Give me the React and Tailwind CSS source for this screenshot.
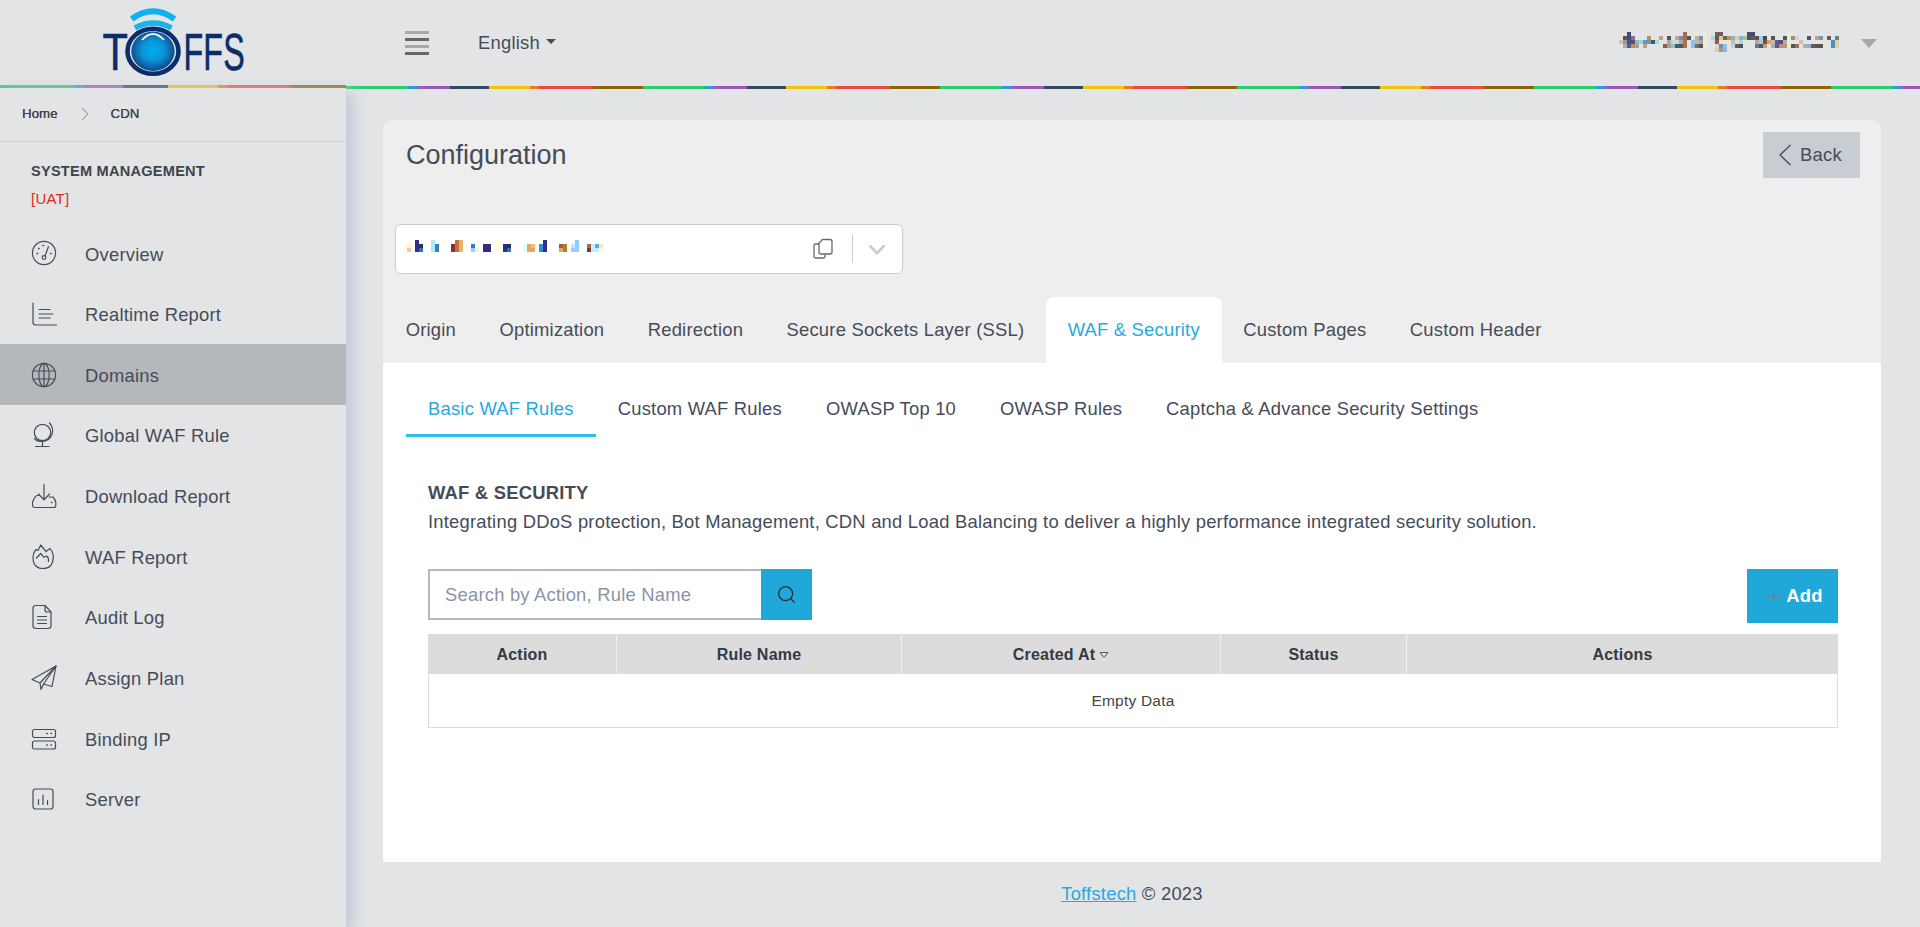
import React from "react";
import { Search, Plus } from "lucide-react";

const stroke = "#454c58";

const userCells = [
  [0, [[2,"#4a4a78"],[16,"#a8704a"],[21,"#ecebd8"],[24,"#6f5f60"],[25,"#6f5f60"],[32,"#4a4a70"],[33,"#4a4a70"],[42,"#ecebd8"]]],
  [1, [[1,"#55585c"],[2,"#4a4a78"],[3,"#77777f"],[7,"#c09050"],[10,"#c0a078"],[12,"#555555"],[14,"#c0a890"],[15,"#7a8ab0"],[16,"#a8704a"],[17,"#555555"],[19,"#c8b090"],[20,"#6f8fb0"],[21,"#ecebd8"],[23,"#a8d8e8"],[24,"#6a5a50"],[25,"#e0c8a0"],[26,"#6a6a50"],[27,"#c09060"],[28,"#7fb0e0"],[29,"#d8d0b0"],[30,"#90b0d0"],[31,"#a0c0c0"],[32,"#555545"],[33,"#605a70"],[34,"#555555"],[35,"#a8c8e8"],[36,"#444455"],[38,"#555566"],[41,"#555555"],[42,"#ecebd8"],[43,"#a09070"],[44,"#c8d8e8"],[47,"#555555"],[49,"#c0a080"],[50,"#8090b0"],[52,"#6a5a50"],[54,"#6a7a90"]]],
  [2, [[0,"#e0c09a"],[1,"#9a9aa0"],[2,"#50507a"],[3,"#50507a"],[4,"#b0b0b0"],[5,"#a0d0e8"],[6,"#5b9bd5"],[7,"#5b9bd5"],[8,"#555555"],[9,"#a8d8e8"],[12,"#b0a8a0"],[13,"#b0e0e0"],[14,"#c0e0e0"],[15,"#a8a8a8"],[16,"#a8704a"],[18,"#90c0e8"],[19,"#a8c0c8"],[20,"#a8a8a0"],[21,"#ecebd8"],[23,"#e0e0c8"],[24,"#a05060"],[25,"#e8e8d0"],[26,"#e8e8c8"],[27,"#e8e8c8"],[28,"#c0c0b0"],[29,"#e0e0c0"],[30,"#b0d0e0"],[31,"#e8e8c8"],[34,"#b0a8a0"],[35,"#a8c8e8"],[36,"#805030"],[37,"#d0a878"],[38,"#e0b890"],[39,"#605a90"],[40,"#505080"],[41,"#b0b0b0"],[42,"#ecebd8"],[45,"#e0c090"],[50,"#e8e8d0"],[53,"#4f8fc0"],[54,"#e0d0a0"]]],
  [3, [[1,"#a0b0c0"],[2,"#555a80"],[3,"#c09060"],[4,"#a0a0a0"],[6,"#c8a070"],[11,"#905858"],[12,"#a8a090"],[13,"#90c0e0"],[14,"#555560"],[15,"#555560"],[16,"#a8704a"],[18,"#90c0e8"],[19,"#70705a"],[20,"#555555"],[21,"#ecebd8"],[24,"#d8d8c0"],[25,"#6f8fb0"],[26,"#90c0e8"],[28,"#c0d0e8"],[29,"#555a70"],[30,"#505050"],[34,"#6a7a90"],[35,"#555555"],[36,"#c8a070"],[37,"#e0e0e0"],[38,"#a8b0c0"],[39,"#5a5a90"],[40,"#c09868"],[41,"#c09868"],[42,"#ecebd8"],[43,"#555555"],[44,"#a86a4a"],[46,"#a8b0b8"],[47,"#90b0d0"],[48,"#605a5a"],[49,"#555555"],[50,"#555555"],[51,"#e8e8d0"],[53,"#4f8fc0"],[54,"#e0d0a0"]]],
  [4, [[24,"#e0c8a8"],[25,"#909aa0"],[26,"#90b8d8"]]],
];

const domainCells = [
  [407,244,"#fff3cf"],[407,248,"#fdc98c"],
  [415,240,"#2e3192"],[415,244,"#2e3192"],[415,248,"#2e3192"],[419,244,"#333333"],[419,248,"#2f6fc0"],
  [431,240,"#b0e8ff"],[431,244,"#b0e8ff"],[431,248,"#b0e8ff"],[435,244,"#3a7fc0"],[435,248,"#3a7fc0"],
  [451,244,"#8a3030"],[451,248,"#8a3030"],[455,240,"#b87838"],[455,244,"#b87838"],[455,248,"#b87838"],[459,240,"#eab070"],[459,244,"#eab070"],[459,248,"#eab070"],
  [471,244,"#2f7fc0"],[471,248,"#99ccff"],[475,248,"#fff0c0"],
  [483,244,"#2e2e80"],[483,248,"#2e2e80"],[487,244,"#442e50"],[487,248,"#2e2e80"],
  [495,240,"#ffffd0"],[495,244,"#ffffd0"],[495,248,"#ffffd0"],
  [503,244,"#2e2e80"],[503,248,"#2e2e80"],[507,244,"#333333"],[507,248,"#2f6fc0"],
  [523,244,"#e0ffff"],[523,248,"#e0ffff"],[527,244,"#e0a860"],[527,248,"#e0a860"],[531,244,"#f0c080"],[531,248,"#e0a860"],
  [539,244,"#2f8fd0"],[539,248,"#2f8fd0"],[543,240,"#2e3192"],[543,244,"#2e3192"],[543,248,"#2e3192"],
  [559,244,"#a05a30"],[559,248,"#e0a860"],[563,244,"#b87838"],[563,248,"#b87838"],
  [571,244,"#bfe6ff"],[571,248,"#99ccff"],[575,240,"#8fcfff"],[575,244,"#8fcfff"],[575,248,"#8fcfff"],
  [587,244,"#a86a40"],[587,248,"#7a3a30"],
  [591,244,"#bff0ff"],[591,248,"#bff0ff"],[595,244,"#60a8e0"],[595,248,"#bfefff"],[599,244,"#ffe8b0"],[599,248,"#fff8e0"],
];

function UserMosaic() {
  return (
    <svg width="220" height="24" viewBox="0 0 220 24" shapeRendering="crispEdges" className="mt-[2px]">
      {userCells.map(([row, cells]) =>
        cells.map(([col, color]) => (
          <rect key={`${row}-${col}`} x={col * 4} y={row * 4} width="4" height="4" fill={color} />
        ))
      )}
    </svg>
  );
}

function DomainMosaic() {
  return (
    <svg width="196" height="12" viewBox="407 240 196 12" shapeRendering="crispEdges" className="mb-[6px]">
      {domainCells.map(([x, y, color]) => (
        <rect key={`${x}-${y}`} x={x} y={y} width="4" height="4" fill={color} />
      ))}
    </svg>
  );
}

function Logo() {
  return (
    <svg width="170" height="85" viewBox="88 0 170 85" className="block overflow-visible">
      <defs>
        <radialGradient id="ball" cx="50%" cy="48%" r="52%">
          <stop offset="0%" stopColor="#00aeef" />
          <stop offset="50%" stopColor="#0b93d6" />
          <stop offset="100%" stopColor="#0d4a8c" />
        </radialGradient>
      </defs>
      <text transform="translate(102.5 70) scale(0.8 1)" fontFamily="'Liberation Sans',sans-serif" fontSize="52" fill="#0c2d6b" stroke="#0c2d6b" strokeWidth="0.6">T</text>
      <text transform="translate(183.5 70) scale(0.62 1)" fontFamily="'Liberation Sans',sans-serif" fontSize="52" fill="#0c2d6b" stroke="#0c2d6b" strokeWidth="0.6">FFS</text>
      <ellipse cx="153" cy="51.3" rx="25.5" ry="22.5" fill="#e3e4e6" stroke="#0c2d6b" strokeWidth="4.6" />
      <ellipse cx="153" cy="51.3" rx="21.7" ry="19.7" fill="url(#ball)" />
      <path d="M142 40 Q153 28 164 40" fill="none" stroke="#e8f6fc" strokeWidth="1.8" />
      <path d="M135 28 Q153 18 171.5 28" fill="none" stroke="#19b4ee" strokeWidth="5.5" />
      <path d="M131.7 19 Q153 3.6 174.5 19" fill="none" stroke="#0fb2f0" strokeWidth="6" />
    </svg>
  );
}

const Svg = ({ children }) => (
  <svg width="26" height="26" viewBox="0 0 26 26" fill="none" stroke={stroke} strokeWidth="1.2" strokeLinecap="round" strokeLinejoin="round" className="shrink-0">
    {children}
  </svg>
);

const icons = {
  overview: (
    <Svg>
      <circle cx="13" cy="13" r="11.6" />
      <circle cx="13" cy="17.5" r="1.8" />
      <path d="M14 16 L17.5 6.5" />
      <path d="M6 13.5h.6M7.6 8.5h.5M12 5.5h.5M19.5 13.5h.6" strokeWidth="1.6" />
    </Svg>
  ),
  realtime: (
    <Svg>
      <path d="M2 2 V21 Q2 24 5 24 H25.5" />
      <path d="M8 8.5 H19M8 13 H22M8 17 H19" />
    </Svg>
  ),
  globe: (
    <Svg>
      <circle cx="13" cy="13" r="11.6" />
      <ellipse cx="13" cy="13" rx="5.2" ry="11.6" />
      <path d="M13 1.4 V24.6M2.2 9 H23.8M2.2 17 H23.8" />
    </Svg>
  ),
  globalWaf: (
    <Svg>
      <circle cx="11.5" cy="10.5" r="8.2" />
      <path d="M18.5 1 Q23 6 21 12.5 Q18.5 19 11 19.5 Q6 19.5 3.5 16.5" />
      <path d="M11.5 20 V24.5M4.5 24.5 H18" />
    </Svg>
  ),
  download: (
    <Svg>
      <path d="M13 1.5 V16.5M7.5 11 L13 16.8 L18.5 11" />
      <path d="M8 12.5 H6 Q4 13 3 16 L1.5 19 Q1 24.5 3.5 24.5 H23 Q25 24.5 24.8 21 V19.5 Q24.5 17 22 14 H18" />
      <path d="M20.5 19.5 h.4" strokeWidth="1.6" />
    </Svg>
  ),
  waf: (
    <Svg>
      <path d="M9.7 1 L15 7.5 L19 4.5 Q22.5 9 22.3 13 Q22 24.5 12.3 24.5 Q2 24.5 2 13.5 Q2 9 5 5.5 L7 6.5 Z" />
      <path d="M5.5 14 L9.7 9.5 L13 13.3 L15.7 12 Q18 13.5 17.5 17.5" />
    </Svg>
  ),
  audit: (
    <Svg>
      <path d="M14 1.5 H5 Q2 1.5 2 4.5 V21.5 Q2 24.5 5 24.5 H17 Q20 24.5 20 21.5 V8 Z" />
      <path d="M14 1.5 V6 Q14 8 16 8 H20" />
      <path d="M6.5 12.5 H15.5M6.5 16 H15.5M6.5 19.5 H15.5" />
    </Svg>
  ),
  plan: (
    <Svg>
      <path d="M25 1 L1 14.5 L9 18 L25 1 L21 21.5 L12.5 19 L10 24.5 L9 18" />
      <path d="M12.5 19 L25 1" />
    </Svg>
  ),
  binding: (
    <Svg>
      <rect x="1.5" y="3.5" width="23" height="8" rx="2" />
      <rect x="1.5" y="15" width="23" height="8" rx="2" />
      <path d="M15.8 7.5h.4M20 7.5h.4M15.8 19h.4M20 19h.4" strokeWidth="1.6" />
    </Svg>
  ),
  server: (
    <Svg>
      <rect x="2" y="3" width="20" height="20" rx="2.5" />
      <path d="M7.5 13.5 V18.5M12 9 V18.5M16.5 14.5 V18.5" />
    </Svg>
  ),
};

const menu = [
  ["Overview", "overview"],
  ["Realtime Report", "realtime"],
  ["Domains", "globe", true],
  ["Global WAF Rule", "globalWaf"],
  ["Download Report", "download"],
  ["WAF Report", "waf"],
  ["Audit Log", "audit"],
  ["Assign Plan", "plan"],
  ["Binding IP", "binding"],
  ["Server", "server"],
];

const tabs = ["Origin", "Optimization", "Redirection", "Secure Sockets Layer (SSL)", "WAF & Security", "Custom Pages", "Custom Header"];
const subTabs = ["Basic WAF Rules", "Custom WAF Rules", "OWASP Top 10", "OWASP Rules", "Captcha & Advance Security Settings"];

const Th = ({ children, last }) => (
  <div className={`flex items-center justify-center gap-1 pt-[2px] ${last ? "" : "border-r border-[#f0f0f0]"}`}>
    {children}
  </div>
);

export default function App() {
  return (
    <div className="flex h-[927px] w-full overflow-hidden bg-[#e3e4e6] font-['Liberation_Sans',Arial,sans-serif] text-[18.4px] tracking-[0.22px] text-[#454c58]">
      <div className="relative z-10 flex w-[346px] shrink-0 flex-col">
        <div className="flex h-[85px] justify-center">
          <Logo />
        </div>
        <div className="h-[3px] bg-[repeating-linear-gradient(90deg,#4ccb85_0,#4ccb85_74px,#5a9fd8_74px,#5a9fd8_84px,#a36fc0_84px,#a36fc0_123px,#4d6074_123px,#4d6074_168px,#eec32f_168px,#eec32f_218px,#e08b3a_218px,#e08b3a_228px,#e6665a_228px,#e6665a_291px,#97782e_291px,#97782e_346px)]" />
        <aside className="flex-1 bg-[#e3e4e6] shadow-[8px_4px_14px_#c4cadb]">
          <div className="flex h-[54px] items-center border-b border-[#cfd0d3] pb-[2px] pl-[22px] text-[13px] text-[#3f444c] [text-shadow:0.3px_0_0_#3f444c]">
            <span>Home</span>
            <svg width="8" height="14" viewBox="0 0 8 14" fill="none" stroke="#aaaaaa" strokeWidth="1.2" className="ml-[23px] mr-[22px]">
              <path d="M1 1 L7 7 L1 13" />
            </svg>
            <span>CDN</span>
          </div>
          <div className="pl-[31px] pt-[20px]">
            <div className="text-[14.6px] font-bold leading-[18px] text-[#3f444c]">SYSTEM MANAGEMENT</div>
            <div className="mt-[10px] text-[15px] leading-[18px] text-[#e32b12]">[UAT]</div>
          </div>
          <nav className="mt-[15px]">
            {menu.map(([label, icon, active]) => (
              <div key={label} className={`flex h-[60.67px] items-center pl-[31px] ${active ? "bg-[#b4b8bb]" : ""}`}>
                <span className="flex w-[54px]">{icons[icon]}</span>
                <span className="pt-[2px]">{label}</span>
              </div>
            ))}
          </nav>
        </aside>
      </div>

      <div className="flex min-w-0 flex-1 flex-col">
        <header className="flex h-[86px] items-center justify-between pl-[59px] pr-[43px]">
          <div className="flex items-center">
            <div className="flex h-[24px] w-[24px] flex-col justify-between">
              <span className="h-[3px] bg-[#a8a8a8]" />
              <span className="h-[3px] bg-[#666666]" />
              <span className="h-[3px] bg-[#a8a8a8]" />
              <span className="h-[3px] bg-[#666666]" />
            </div>
            <div className="ml-[49px] flex items-center gap-[6px]">
              <span>English</span>
              <span className="mt-[-2px] h-0 w-0 border-x-[5px] border-t-[5px] border-x-transparent border-t-[#454c58]" />
            </div>
          </div>
          <div className="flex items-center">
            <UserMosaic />
            <span className="ml-[22px] h-0 w-0 border-x-[8px] border-t-[9px] border-x-transparent border-t-[#a8a8a8]" />
          </div>
        </header>
        <div className="h-[3px] bg-[repeating-linear-gradient(90deg,#2ecc71_0,#2ecc71_62px,#3498db_62px,#3498db_71px,#9b59b6_71px,#9b59b6_104px,#34495e_104px,#34495e_143px,#f1c40f_143px,#f1c40f_184px,#e67e22_184px,#e67e22_193px,#e74c3c_193px,#e74c3c_247px,#8b6508_247px,#8b6508_297px)]" />

        <main className="flex flex-1 flex-col pl-[37px] pr-[39px] pt-[31px]">
          <section className="flex h-[742px] flex-col overflow-hidden rounded-t-[12px] bg-white">
            <div className="bg-[#eeeeee]">
              <div className="flex h-[70px] items-start justify-between border-b border-[#f3f3f3] pr-[21px]">
                <h1 className="mt-[19px] pl-[23px] text-[27px] font-normal leading-[32px] tracking-normal">Configuration</h1>
                <button className="mt-[12px] flex h-[46px] w-[97px] items-center justify-center gap-[8px] bg-[#c8cdd4]">
                  <svg width="14" height="22" viewBox="0 0 14 22" fill="none" stroke="#454c58" strokeWidth="1.3" className="ml-[-3px]">
                    <path d="M12.5 1 L2 11 L12.5 21" />
                  </svg>
                  <span>Back</span>
                </button>
              </div>
              <div className="ml-[12px] mt-[34px] flex h-[50px] w-[508px] items-center rounded-[6px] border border-[#cccccc] bg-white pl-[11px]">
                <DomainMosaic />
                <svg width="22" height="22" viewBox="0 0 22 22" fill="none" stroke="#666a70" strokeWidth="1.3" strokeLinejoin="round" className="ml-[209px]">
                  <path d="M7 6 H3.5 Q2 6 2 7.5 V18.5 Q2 20 3.5 20 H11 Q13 20 13 18 V16" />
                  <path d="M10.5 1.5 H18 Q20 1.5 20 3.5 V14 Q20 16 18 16 H9 Q7 16 7 14 V5 Z" />
                </svg>
                <span className="ml-[18px] h-[28px] w-px bg-[#cccccc]" />
                <svg width="18" height="11" viewBox="0 0 18 11" fill="none" stroke="#cccccc" strokeWidth="2.8" className="ml-[15px] mt-[1px]">
                  <path d="M1.5 1.5 L9 9 L16.5 1.5" />
                </svg>
              </div>
              <div className="mt-[23px] flex h-[66px] pl-[1px]">
                {tabs.map((t) =>
                  t === "WAF & Security" ? (
                    <div key={t} className="flex items-center rounded-t-[8px] bg-white px-[21.7px] text-[#27a9e0]">{t}</div>
                  ) : (
                    <div key={t} className="flex items-center px-[21.7px]">{t}</div>
                  )
                )}
              </div>
            </div>

            <div className="flex h-[74px] items-end pl-[23px]">
              {subTabs.map((t, i) => (
                <div key={t} className={`flex h-[59px] items-center border-b-[3px] px-[22px] pt-[5px] ${i === 0 ? "border-[#2cbdee] text-[#27a9e0]" : "border-transparent"}`}>
                  {t}
                </div>
              ))}
            </div>

            <div className="pl-[45px] pr-[43px]">
              <h2 className="mt-[45px] text-[18.4px] font-bold leading-[22px]">WAF &amp; SECURITY</h2>
              <p className="mt-[4px] leading-[27px]">Integrating DDoS protection, Bot Management, CDN and Load Balancing to deliver a highly performance integrated security solution.</p>

              <div className="mt-[34px] flex h-[65px] items-start justify-between">
                <div className="flex">
                  <div className="flex h-[51px] w-[333px] items-center border-2 border-r-0 border-[#b5b9c1] pl-[15px] text-[#8a94a6]">Search by Action, Rule Name</div>
                  <button className="flex h-[51px] w-[51px] items-center justify-center bg-[#20a8d8]">
                    <Search size={21} strokeWidth={1.5} color="#26323a" />
                  </button>
                </div>
                <button className="flex h-[54px] w-[91px] items-center justify-center gap-[1px] bg-[#20a8d8] font-bold text-white">
                  <Plus size={23} strokeWidth={1.3} color="#5f8296" />
                  <span>Add</span>
                </button>
              </div>

              <div className="grid h-[40px] grid-cols-[189px_285px_319px_186px_431px] bg-[#dcdcdc] text-[16px] font-bold text-[#333a45]">
                <Th>Action</Th>
                <Th>Rule Name</Th>
                <Th>
                  <span>Created At</span>
                  <svg width="10" height="8" viewBox="0 0 10 8" fill="none" stroke="#555b66" strokeWidth="1"><path d="M1 1.5 H9 L5 6.5 Z" /></svg>
                </Th>
                <Th>Status</Th>
                <Th last>Actions</Th>
              </div>
              <div className="flex h-[54px] items-center justify-center border border-t-0 border-[#dddddd] text-[15.5px] text-[#444444]">Empty Data</div>
            </div>
          </section>
          <footer className="mt-[21px] text-center leading-[22px]">
            <a className="text-[#27a9e0] underline">Toffstech</a> © 2023
          </footer>
        </main>
      </div>
    </div>
  );
}
